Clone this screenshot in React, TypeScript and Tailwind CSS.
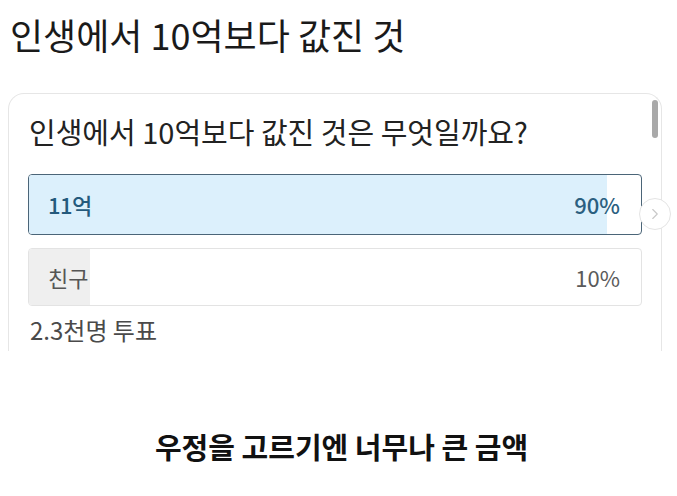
import { ChevronRight } from "lucide-react";

const font = { fontFamily: '"Noto Sans CJK KR", "Noto Sans", sans-serif' };

const options = [
  { label: "11억", pct: 90, bar: 94.5, picked: true },
  { label: "친구", pct: 10, bar: 10, picked: false },
];

export default function App() {
  return (
    <div className="w-[677px] h-[496px] bg-white overflow-hidden" style={font}>
      {/* Page title */}
      <h1 className="pl-[10px] pt-[11px] text-[36px] leading-[46px] font-normal text-[#1a1a1a]">
        인생에서 10억보다 값진 것
      </h1>

      {/* Poll card */}
      <div className="relative ml-[8px] mt-[36px] w-[654px] h-[258px] rounded-t-2xl border border-b-0 border-[#e6e6e6] px-[19px] pt-[16px]">
        <div className="absolute right-[3px] top-[6px] w-[6px] h-[38px] rounded-full bg-[#a9a9a9]" />

        <p className="pl-[1px] text-[29px] leading-[42px] text-[#222]">
          인생에서 10억보다 값진 것은 무엇일까요?
        </p>

        <div className="mt-[22px] flex flex-col gap-[13px]">
          {options.map((o) => (
            <div
              key={o.label}
              className={
                o.picked
                  ? "relative h-[61px] rounded-[4px] border-[1.5px] border-[#4b6578] bg-white overflow-hidden"
                  : "relative h-[58px] rounded-[4px] border border-[#e3e3e3] bg-white overflow-hidden"
              }
            >
              <div
                className={o.picked ? "absolute inset-y-0 left-0 bg-[#dcf0fc]" : "absolute inset-y-0 left-0 bg-[#efefef]"}
                style={{ width: `${o.bar}%` }}
              />
              <div className="relative flex h-full items-center justify-between pl-[19px] pr-[21px]">
                <span
                  className={
                    o.picked
                      ? "text-[22px] font-medium text-[#245a7c] tracking-[-0.5px]"
                      : "text-[22px] text-[#555]"
                  }
                >
                  {o.label}
                </span>
                <span
                  className={
                    o.picked
                      ? "text-[22px] font-medium text-[#2b5f80]"
                      : "text-[22px] text-[#5a5a5a]"
                  }
                >
                  {o.pct}%
                </span>
              </div>
            </div>
          ))}
        </div>

        <p className="mt-[8px] pl-[2px] text-[24px] leading-[32px] text-[#4a4a4a]">2.3천명 투표</p>

        {/* carousel arrow */}
        <div className="absolute right-[-10px] top-[104px] flex h-[32px] w-[32px] items-center justify-center rounded-full border border-[#e4e4e4] bg-white">
          <ChevronRight className="h-[18px] w-[18px] text-[#c8c8c8]" strokeWidth={1.5} />
        </div>
      </div>

      {/* Caption */}
      <p className="mt-[76px] pl-[6px] text-center text-[29px] leading-[38px] font-bold text-[#111]">
        우정을 고르기엔 너무나 큰 금액
      </p>
    </div>
  );
}
